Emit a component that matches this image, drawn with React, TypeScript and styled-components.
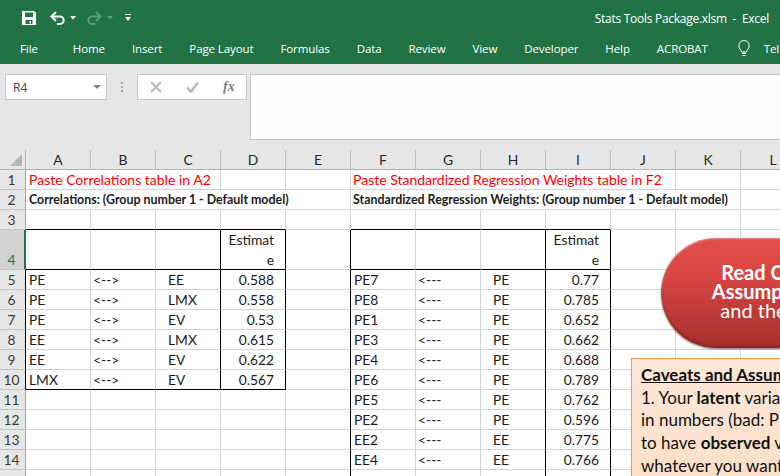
import React from "react";
import styled, { createGlobalStyle } from "styled-components";

const Global = createGlobalStyle`
  html, body { margin: 0; padding: 0; background: #fff; overflow: hidden; }
  #root { width: 780px; height: 476px; overflow: hidden; }
`;

const ui = `"Open Sans", "Noto Sans", sans-serif`;
const cellFont = `Lato, "Open Sans", sans-serif`;
const GREEN = "#217346";
const GRID = "#d4d4d4";

const Page = styled.div`
  position: relative;
  width: 780px;
  height: 476px;
  overflow: hidden;
  background: #fff;
`;

const TitleBar = styled.header`
  height: 36px;
  background: ${GREEN};
  display: flex;
  align-items: center;
  padding: 0 11px 0 21px;
  color: #fff;
`;
const QuickButton = styled.svg<{ $ml?: number }>`
  display: block;
  flex: none;
  margin-left: ${(p) => p.$ml ?? 0}px;
`;
const Title = styled.div`
  margin-left: auto;
  font: 12px ${ui};
  letter-spacing: -0.27px;
  white-space: pre;
`;

const TabBar = styled.nav`
  height: 28px;
  background: ${GREEN};
  display: flex;
  align-items: center;
  padding: 0 0 3px 20px;
  box-sizing: border-box;
  white-space: nowrap;
`;
const Tab = styled.span<{ $first?: boolean }>`
  color: #fff;
  font: 11.5px ${ui};
  letter-spacing: -0.1px;
  margin-right: ${(p) => (p.$first ? 35 : 27)}px;
  flex: none;
`;
const Bulb = styled.svg`
  flex: none;
  margin: 0 13px 0 2px;
`;

const FormulaBar = styled.section`
  height: 86px;
  box-sizing: border-box;
  background: #e6e6e6;
  display: flex;
  align-items: flex-start;
  padding: 10px 0 10px 5px;
`;
const NameBox = styled.div`
  width: 102px;
  height: 26px;
  box-sizing: border-box;
  background: #fff;
  border: 1px solid #c6c6c6;
  display: flex;
  align-items: center;
  justify-content: space-between;
  padding: 0 5px 0 7px;
  font: 12px ${ui};
  color: #444;
`;
const Caret = styled.i`
  display: block;
  width: 0;
  height: 0;
  border-left: 4px solid transparent;
  border-right: 4px solid transparent;
  border-top: 4px solid #808080;
`;
const Grip = styled.div`
  width: 30px;
  height: 26px;
  display: flex;
  flex-direction: column;
  align-items: center;
  justify-content: center;
  gap: 2px;
`;
const GripDot = styled.i`
  display: block;
  width: 2px;
  height: 2px;
  background: #a8a8a8;
`;
const FunctionBox = styled.div`
  width: 110px;
  height: 26px;
  box-sizing: border-box;
  background: #fff;
  border: 1px solid #c6c6c6;
  display: flex;
  align-items: center;
  gap: 24px;
  padding-left: 12px;
`;
const Fx = styled.span`
  font: italic bold 14px "Liberation Serif", serif;
  color: #808080;
`;
const FormulaInput = styled.div`
  flex: 1;
  height: 66px;
  margin-left: 3px;
  box-sizing: border-box;
  background: #fefefe;
  border: 1px solid #c6c6c6;
  border-right: 0;
`;

const Sheet = styled.section`
  display: grid;
  grid-template-columns: 26px repeat(12, 65px);
  grid-template-rows: 20px 20px 20px 20px 40px repeat(11, 20px);
  font: 13.8px ${cellFont};
  color: #1a1a1a;
`;
const Corner = styled.div`
  background: #e6e6e6;
  border-right: 1px solid #b4b4b4;
  border-bottom: 1px solid #b4b4b4;
  position: relative;
  &::after {
    content: "";
    position: absolute;
    right: 3px;
    bottom: 3px;
    border-left: 12px solid transparent;
    border-bottom: 12px solid #b6b6b6;
  }
`;
const ColHead = styled.div`
  background: #e6e6e6;
  border-right: 1px solid #bdbdbd;
  border-bottom: 1px solid #b4b4b4;
  display: flex;
  align-items: center;
  justify-content: center;
  color: #262626;
`;
const RowHead = styled.div<{ $active?: boolean; $black?: boolean }>`
  background: ${(p) => (p.$active ? "#d2d2d2" : "#e6e6e6")};
  color: ${(p) => (p.$active ? GREEN : "#3a3a3a")};
  box-sizing: border-box;
  border-bottom: 1px solid #c4c4c4;
  border-right: ${(p) =>
    p.$active ? `2px solid ${GREEN}` : `1px solid ${p.$black ? "#000" : "#a6a6a6"}`};
  padding-right: ${(p) => (p.$active ? 1 : 2)}px;
  display: flex;
  align-items: flex-end;
  justify-content: center;
  line-height: 18px;
`;
const Cell = styled.div<{
  $span?: number;
  $right?: boolean;
  $indent?: number;
  $blackR?: boolean;
  $blackB?: boolean;
}>`
  grid-column: span ${(p) => p.$span ?? 1};
  box-sizing: border-box;
  min-width: 0;
  border-right: 1px solid ${(p) => (p.$blackR ? "#000" : GRID)};
  border-bottom: 1px solid ${(p) => (p.$blackB ? "#000" : GRID)};
  display: flex;
  flex-direction: column;
  justify-content: flex-end;
  align-items: ${(p) => (p.$right ? "flex-end" : "flex-start")};
  padding: ${(p) =>
    p.$right ? `0 ${p.$indent ?? 11}px 0 0` : `0 0 0 ${p.$indent ?? 3}px`};
  line-height: 18px;
  white-space: nowrap;
`;
const RedText = styled.span`
  color: #ff0000;
  font-size: 14px;
`;
const BoldText = styled.span`
  font-weight: 700;
  font-size: 12.4px;
`;
const WrapLine = styled.span`
  display: block;
  line-height: 20px;
  text-align: right;
  width: 100%;
  &:last-child {
    margin-bottom: -1px;
  }
`;

const Pill = styled.div`
  position: absolute;
  left: 661px;
  top: 238px;
  width: 240px;
  height: 110px;
  box-sizing: border-box;
  padding-bottom: 3px;
  border-radius: 55px;
  background: linear-gradient(180deg, #e04f4c 0%, #d84643 35%, #b93835 75%, #a52f2d 100%);
  box-shadow: inset 0 1px 2px rgba(255, 255, 255, 0.35), inset 0 -2px 3px rgba(90, 10, 10, 0.35),
    0 1px 2px rgba(0, 0, 0, 0.55);
  color: #fff;
  font: 700 20px/18.7px ${cellFont};
  display: flex;
  flex-direction: column;
  align-items: center;
  justify-content: center;
  white-space: nowrap;
`;
const PillThin = styled.span`
  font-weight: 400;
`;
const Note = styled.aside`
  position: absolute;
  left: 631px;
  top: 358px;
  width: 400px;
  height: 160px;
  box-sizing: border-box;
  padding: 5px 0 0 9px;
  background: linear-gradient(180deg, #fde8d8 0%, #fbdcc4 100%);
  border: 1px solid #f79646;
  box-shadow: 1px 1px 2px rgba(120, 70, 20, 0.3);
  font: 17px/22.7px ${cellFont};
  color: #111;
  white-space: nowrap;
`;
const NoteTitle = styled.div`
  font-weight: 700;
  text-decoration: underline;
`;
const NoteLine = styled.div``;

const SaveIcon = () => (
  <QuickButton width="16" height="16" viewBox="0 0 16 16">
    <path
      fill="#fff"
      fillRule="evenodd"
      d="M1 1h12l2 2v12H1zM4 2.500v4.500h8V2.500zM4.500 10v4h7v-4zM8.500 11h1.500v2.500H8.500z"
    />
  </QuickButton>
);
const ArrowIcon = ({ color, flip, ml }: { color: string; flip?: boolean; ml: number }) => (
  <QuickButton $ml={ml} width="16" height="14" viewBox="0 0 16 14">
    <g
      transform={flip ? "translate(16 0) scale(-1 1)" : undefined}
      fill="none"
      stroke={color}
      strokeWidth="2"
    >
      <path d="M1.500 5.500H10a3.700 3.700 0 0 1 0 7.400H7" />
      <path d="M6 1 1.500 5.500 6 10" />
    </g>
  </QuickButton>
);
const DropIcon = ({ color, ml }: { color: string; ml: number }) => (
  <QuickButton $ml={ml} width="6" height="4" viewBox="0 0 6 4">
    <path d="M0 0h6L3 3.500z" fill={color} />
  </QuickButton>
);
const CustomizeIcon = () => (
  <QuickButton $ml={12} width="6" height="8" viewBox="0 0 6 8">
    <path d="M0 0h6v1H0zM0 3h6L3 7z" fill="#fff" />
  </QuickButton>
);
const BulbIcon = () => (
  <Bulb width="14" height="17" viewBox="0 0 14 17">
    <path
      d="M4.500 12c0-2-2.700-3.200-2.700-6.300a5.200 5.200 0 0 1 10.400 0C12.200 8.800 9.500 10 9.500 12z"
      fill="none"
      stroke="#fff"
      strokeWidth="1"
    />
    <path d="M5 13.500h4M5.500 15.500h3" stroke="#fff" strokeWidth="1" />
  </Bulb>
);

const COLS = ["A", "B", "C", "D", "E", "F", "G", "H", "I", "J", "K", "L"];
const TABS = ["File", "Home", "Insert", "Page Layout", "Formulas", "Data", "Review", "View", "Developer", "Help", "ACROBAT"];

const LEFT = [
  ["PE", "<-->", "EE", "0.588"],
  ["PE", "<-->", "LMX", "0.558"],
  ["PE", "<-->", "EV", "0.53"],
  ["EE", "<-->", "LMX", "0.615"],
  ["EE", "<-->", "EV", "0.622"],
  ["LMX", "<-->", "EV", "0.567"],
];
const RIGHT = [
  ["PE7", "PE", "0.77"],
  ["PE8", "PE", "0.785"],
  ["PE1", "PE", "0.652"],
  ["PE3", "PE", "0.662"],
  ["PE4", "PE", "0.688"],
  ["PE6", "PE", "0.789"],
  ["PE5", "PE", "0.762"],
  ["PE2", "PE", "0.596"],
  ["EE2", "EE", "0.775"],
  ["EE4", "EE", "0.766"],
];

const Estimate = () => (
  <>
    <WrapLine>Estimat</WrapLine>
    <WrapLine>e</WrapLine>
  </>
);

/* Rows 5 to 15 come from the two tables; row 15 is cut off by the window's edge. */
function dataRow(i: number) {
  const l = LEFT[i];
  const r = RIGHT[i];
  const inLeft = !!l;
  const lastLeft = i === LEFT.length - 1;
  return (
    <React.Fragment key={i}>
      <RowHead $black={inLeft}>{i < 10 ? i + 5 : ""}</RowHead>
      <Cell $blackB={lastLeft}>{l?.[0]}</Cell>
      <Cell $blackB={lastLeft} $indent={2}>{l?.[1]}</Cell>
      <Cell $blackB={lastLeft} $blackR={inLeft} $indent={12}>{l?.[2]}</Cell>
      <Cell $blackB={lastLeft} $blackR={inLeft} $right>{l?.[3]}</Cell>
      <Cell $blackR />
      <Cell>{r?.[0]}</Cell>
      <Cell $indent={2}>{r ? "<---" : ""}</Cell>
      <Cell $blackR $indent={12}>{r?.[1]}</Cell>
      <Cell $blackR $right>{r?.[2]}</Cell>
      <Cell />
      <Cell />
      <Cell />
    </React.Fragment>
  );
}

export default function App() {
  return (
    <Page>
      <Global />
      <TitleBar>
        <SaveIcon />
        <ArrowIcon color="#fff" ml={13} />
        <DropIcon color="#fff" ml={4} />
        <ArrowIcon color="#5c9c7a" flip ml={10} />
        <DropIcon color="#5c9c7a" ml={5} />
        <CustomizeIcon />
        <Title>Stats Tools Package.xlsm  -  Excel</Title>
      </TitleBar>
      <TabBar>
        {TABS.map((t, i) => (
          <Tab key={t} $first={i === 0}>{t}</Tab>
        ))}
        <BulbIcon />
        <Tab>Tell me what you want to do</Tab>
      </TabBar>
      <FormulaBar>
        <NameBox>
          R4
          <Caret />
        </NameBox>
        <Grip>
          <GripDot />
          <GripDot />
          <GripDot />
        </Grip>
        <FunctionBox>
          <svg width="12" height="12" viewBox="0 0 12 12">
            <path d="M1 1l10 10M11 1 1 11" stroke="#b9b9b9" strokeWidth="2" fill="none" />
          </svg>
          <svg width="13" height="12" viewBox="0 0 13 12">
            <path d="M1 6.500 5 10.500 12 1.500" stroke="#b9b9b9" strokeWidth="2.500" fill="none" />
          </svg>
          <Fx>fx</Fx>
        </FunctionBox>
        <FormulaInput />
      </FormulaBar>
      <Sheet>
        <Corner />
        {COLS.map((c) => (
          <ColHead key={c}>{c}</ColHead>
        ))}

        <RowHead>1</RowHead>
        <Cell $span={3}><RedText>Paste Correlations table in A2</RedText></Cell>
        <Cell />
        <Cell />
        <Cell $span={5} $indent={2}><RedText>Paste Standardized Regression Weights table in F2</RedText></Cell>
        <Cell />
        <Cell />

        <RowHead>2</RowHead>
        <Cell $span={5}><BoldText>Correlations: (Group number 1 - Default model)</BoldText></Cell>
        <Cell $span={6} $indent={2}><BoldText>Standardized Regression Weights: (Group number 1 - Default model)</BoldText></Cell>
        <Cell />

        <RowHead>3</RowHead>
        <Cell $blackB />
        <Cell $blackB />
        <Cell $blackB />
        <Cell $blackB />
        <Cell />
        <Cell $blackB />
        <Cell $blackB />
        <Cell $blackB />
        <Cell $blackB />
        <Cell />
        <Cell />
        <Cell />

        <RowHead $active>4</RowHead>
        <Cell $blackB />
        <Cell $blackB />
        <Cell $blackB $blackR />
        <Cell $blackB $blackR $right><Estimate /></Cell>
        <Cell $blackR />
        <Cell $blackB />
        <Cell $blackB />
        <Cell $blackB $blackR />
        <Cell $blackB $blackR $right><Estimate /></Cell>
        <Cell />
        <Cell />
        <Cell />

        {Array.from({ length: 11 }, (_, i) => dataRow(i))}
      </Sheet>

      <Pill>
        <span>Read Caveats</span>
        <span>Assumptions of</span>
        <PillThin>and then click</PillThin>
      </Pill>
      <Note>
        <NoteTitle>Caveats and Assumptions</NoteTitle>
        <NoteLine>1. Your <b>latent</b> variable names cannot</NoteLine>
        <NoteLine>in numbers (bad: PE1)</NoteLine>
        <NoteLine>to have <b>observed</b> variable</NoteLine>
        <NoteLine>whatever you want</NoteLine>
      </Note>
    </Page>
  );
}
